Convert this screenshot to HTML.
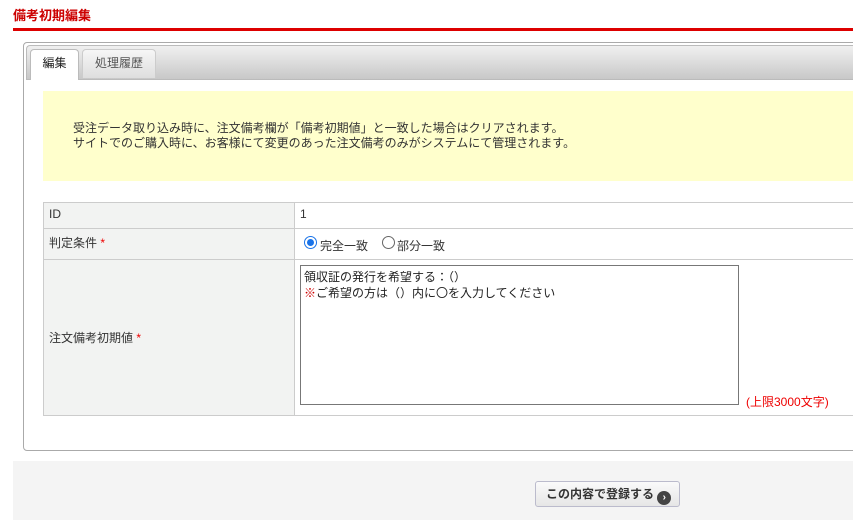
<!DOCTYPE html><html><head><meta charset="utf-8"><style>
body{margin:0;width:853px;height:520px;overflow:hidden;background:#fff;font-family:"Liberation Sans","Noto Sans CJK JP",sans-serif;font-size:12px;color:#333;position:relative}
.a{position:absolute}
</style></head><body>
<div class="a" style="left:13px;top:5px;color:#c00;font-weight:bold;font-size:13px">備考初期編集</div>
<div class="a" style="left:13px;top:28px;width:840px;height:3px;background:#d00"></div>
<div class="a" style="left:23px;top:42px;width:840px;height:407px;border:1px solid #aaa;border-radius:4px"></div>
<div class="a" style="left:26px;top:45px;width:827px;height:33px;background:linear-gradient(#f0f0f0,#c8c8c8);border:1px solid #bbb;border-right:none;border-radius:4px 0 0 0"></div>
<div class="a" style="left:30px;top:49px;width:47px;height:30px;background:#fff;border:1px solid #bbb;border-bottom:none;border-radius:4px 4px 0 0;text-align:center;line-height:26px;color:#222">編集</div>
<div class="a" style="left:82px;top:49px;width:72px;height:28px;background:linear-gradient(#f6f6f6,#dedede);border:1px solid #ccc;border-bottom:none;border-radius:4px 4px 0 0;text-align:center;line-height:26px;color:#555">処理履歴</div>
<div class="a" style="left:43px;top:91px;width:810px;height:90px;background:#ffffcc"></div>
<div class="a" style="left:73px;top:121px;line-height:15px;color:#333">受注データ取り込み時に、注文備考欄が「備考初期値」と一致した場合はクリアされます。<br>サイトでのご購入時に、お客様にて変更のあった注文備考のみがシステムにて管理されます。</div>
<div class="a" style="left:43px;top:202px;width:810px;height:212px;border:1px solid #ccc;border-right:none"></div>
<div class="a" style="left:44px;top:203px;width:250px;height:212px;background:#f2f3f2;border-right:1px solid #ccc"></div>
<div class="a" style="left:43px;top:228px;width:810px;height:1px;background:#ccc"></div>
<div class="a" style="left:43px;top:259px;width:810px;height:1px;background:#ccc"></div>
<div class="a" style="left:49px;top:207px">ID</div>
<div class="a" style="left:300px;top:207px">1</div>
<div class="a" style="left:49px;top:234px">判定条件 <span style="color:#e00">*</span></div>
<div class="a" style="left:49px;top:329px">注文備考初期値 <span style="color:#e00">*</span></div>
<div class="a" style="left:304px;top:236px;width:13px;height:13px;border:1px solid #1a73e8;border-radius:50%;box-sizing:border-box"><div style="margin:2px;width:7px;height:7px;border-radius:50%;background:#1a73e8"></div></div>
<div class="a" style="left:320px;top:237px">完全一致</div>
<div class="a" style="left:382px;top:236px;width:13px;height:13px;border:1px solid #666;border-radius:50%;box-sizing:border-box"></div>
<div class="a" style="left:397px;top:237px">部分一致</div>
<div class="a" style="left:300px;top:265px;width:439px;height:140px;border:1px solid #777;line-height:16px;padding:3px 3px;box-sizing:border-box;color:#222">領収証の発行を希望する：（）<br><span style="color:#c00">※</span>ご希望の方は（）内に〇を入力してください</div>
<div class="a" style="left:746px;top:393px;color:#e00">(上限3000文字)</div>
<div class="a" style="left:13px;top:461px;width:840px;height:59px;background:#f4f4f4"></div>
<div class="a" style="left:535px;top:481px;width:145px;height:26px;border:1px solid #bbc;border-radius:3px;background:linear-gradient(#fafafa,#e6e6e6);box-sizing:border-box;line-height:24px;padding-left:10px;font-weight:bold;color:#333">この内容で登録する <span style="display:inline-block;width:14px;height:14px;border-radius:50%;background:#444;color:#fff;font-size:10px;line-height:14px;text-align:center;vertical-align:-2px">›</span></div>
</body></html>
